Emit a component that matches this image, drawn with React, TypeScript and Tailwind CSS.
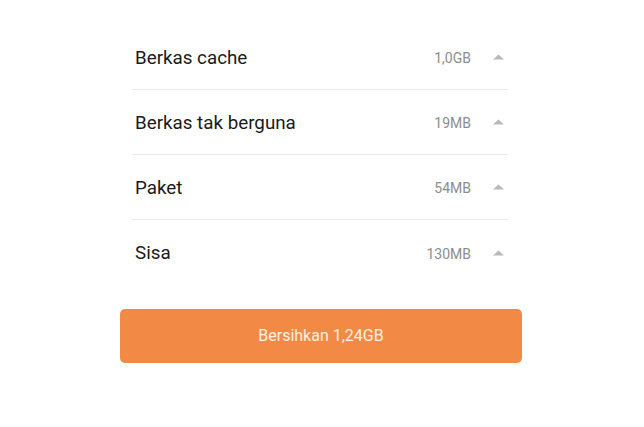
import React from "react";

const rows = [
  { label: "Berkas cache", value: "1,0GB" },
  { label: "Berkas tak berguna", value: "19MB" },
  { label: "Paket", value: "54MB" },
  { label: "Sisa", value: "130MB" },
];

function Tri() {
  return (
    <svg width="11" height="6" viewBox="0 0 11 6" className="block">
      <polygon points="5.5,0.5 11,5.5 0,5.5" fill="#b8b8b8" />
    </svg>
  );
}

export default function App() {
  return (
    <div
      className="w-[644px] h-[427px] bg-white pt-[25px]"
      style={{ fontFamily: "Roboto, 'Noto Sans', sans-serif" }}
    >
      <div className="ml-[132px] w-[376px]">
        {rows.map((r, i) => (
          <div
            key={r.label}
            className={`flex items-center h-[65px] pt-[2px] pl-[3px] pr-[4px] ${
              i < rows.length - 1 ? "border-b border-[#ebebeb]" : ""
            }`}
          >
            <span className="flex-1 text-[18.8px] text-[#1a1a1a] leading-none">{r.label}</span>
            <span className="text-[14px] text-[#8c8c8c] leading-none">{r.value}</span>
            <span className="ml-[22px] mt-[-2px]">
              <Tri />
            </span>
          </div>
        ))}
      </div>
      <div className="ml-[120px] mt-[24px] w-[402px] h-[54px] rounded-[5px] bg-[#f28a46] flex items-center justify-center">
        <span className="text-[16px] text-[#fdf0e4] leading-none">Bersihkan 1,24GB</span>
      </div>
    </div>
  );
}
